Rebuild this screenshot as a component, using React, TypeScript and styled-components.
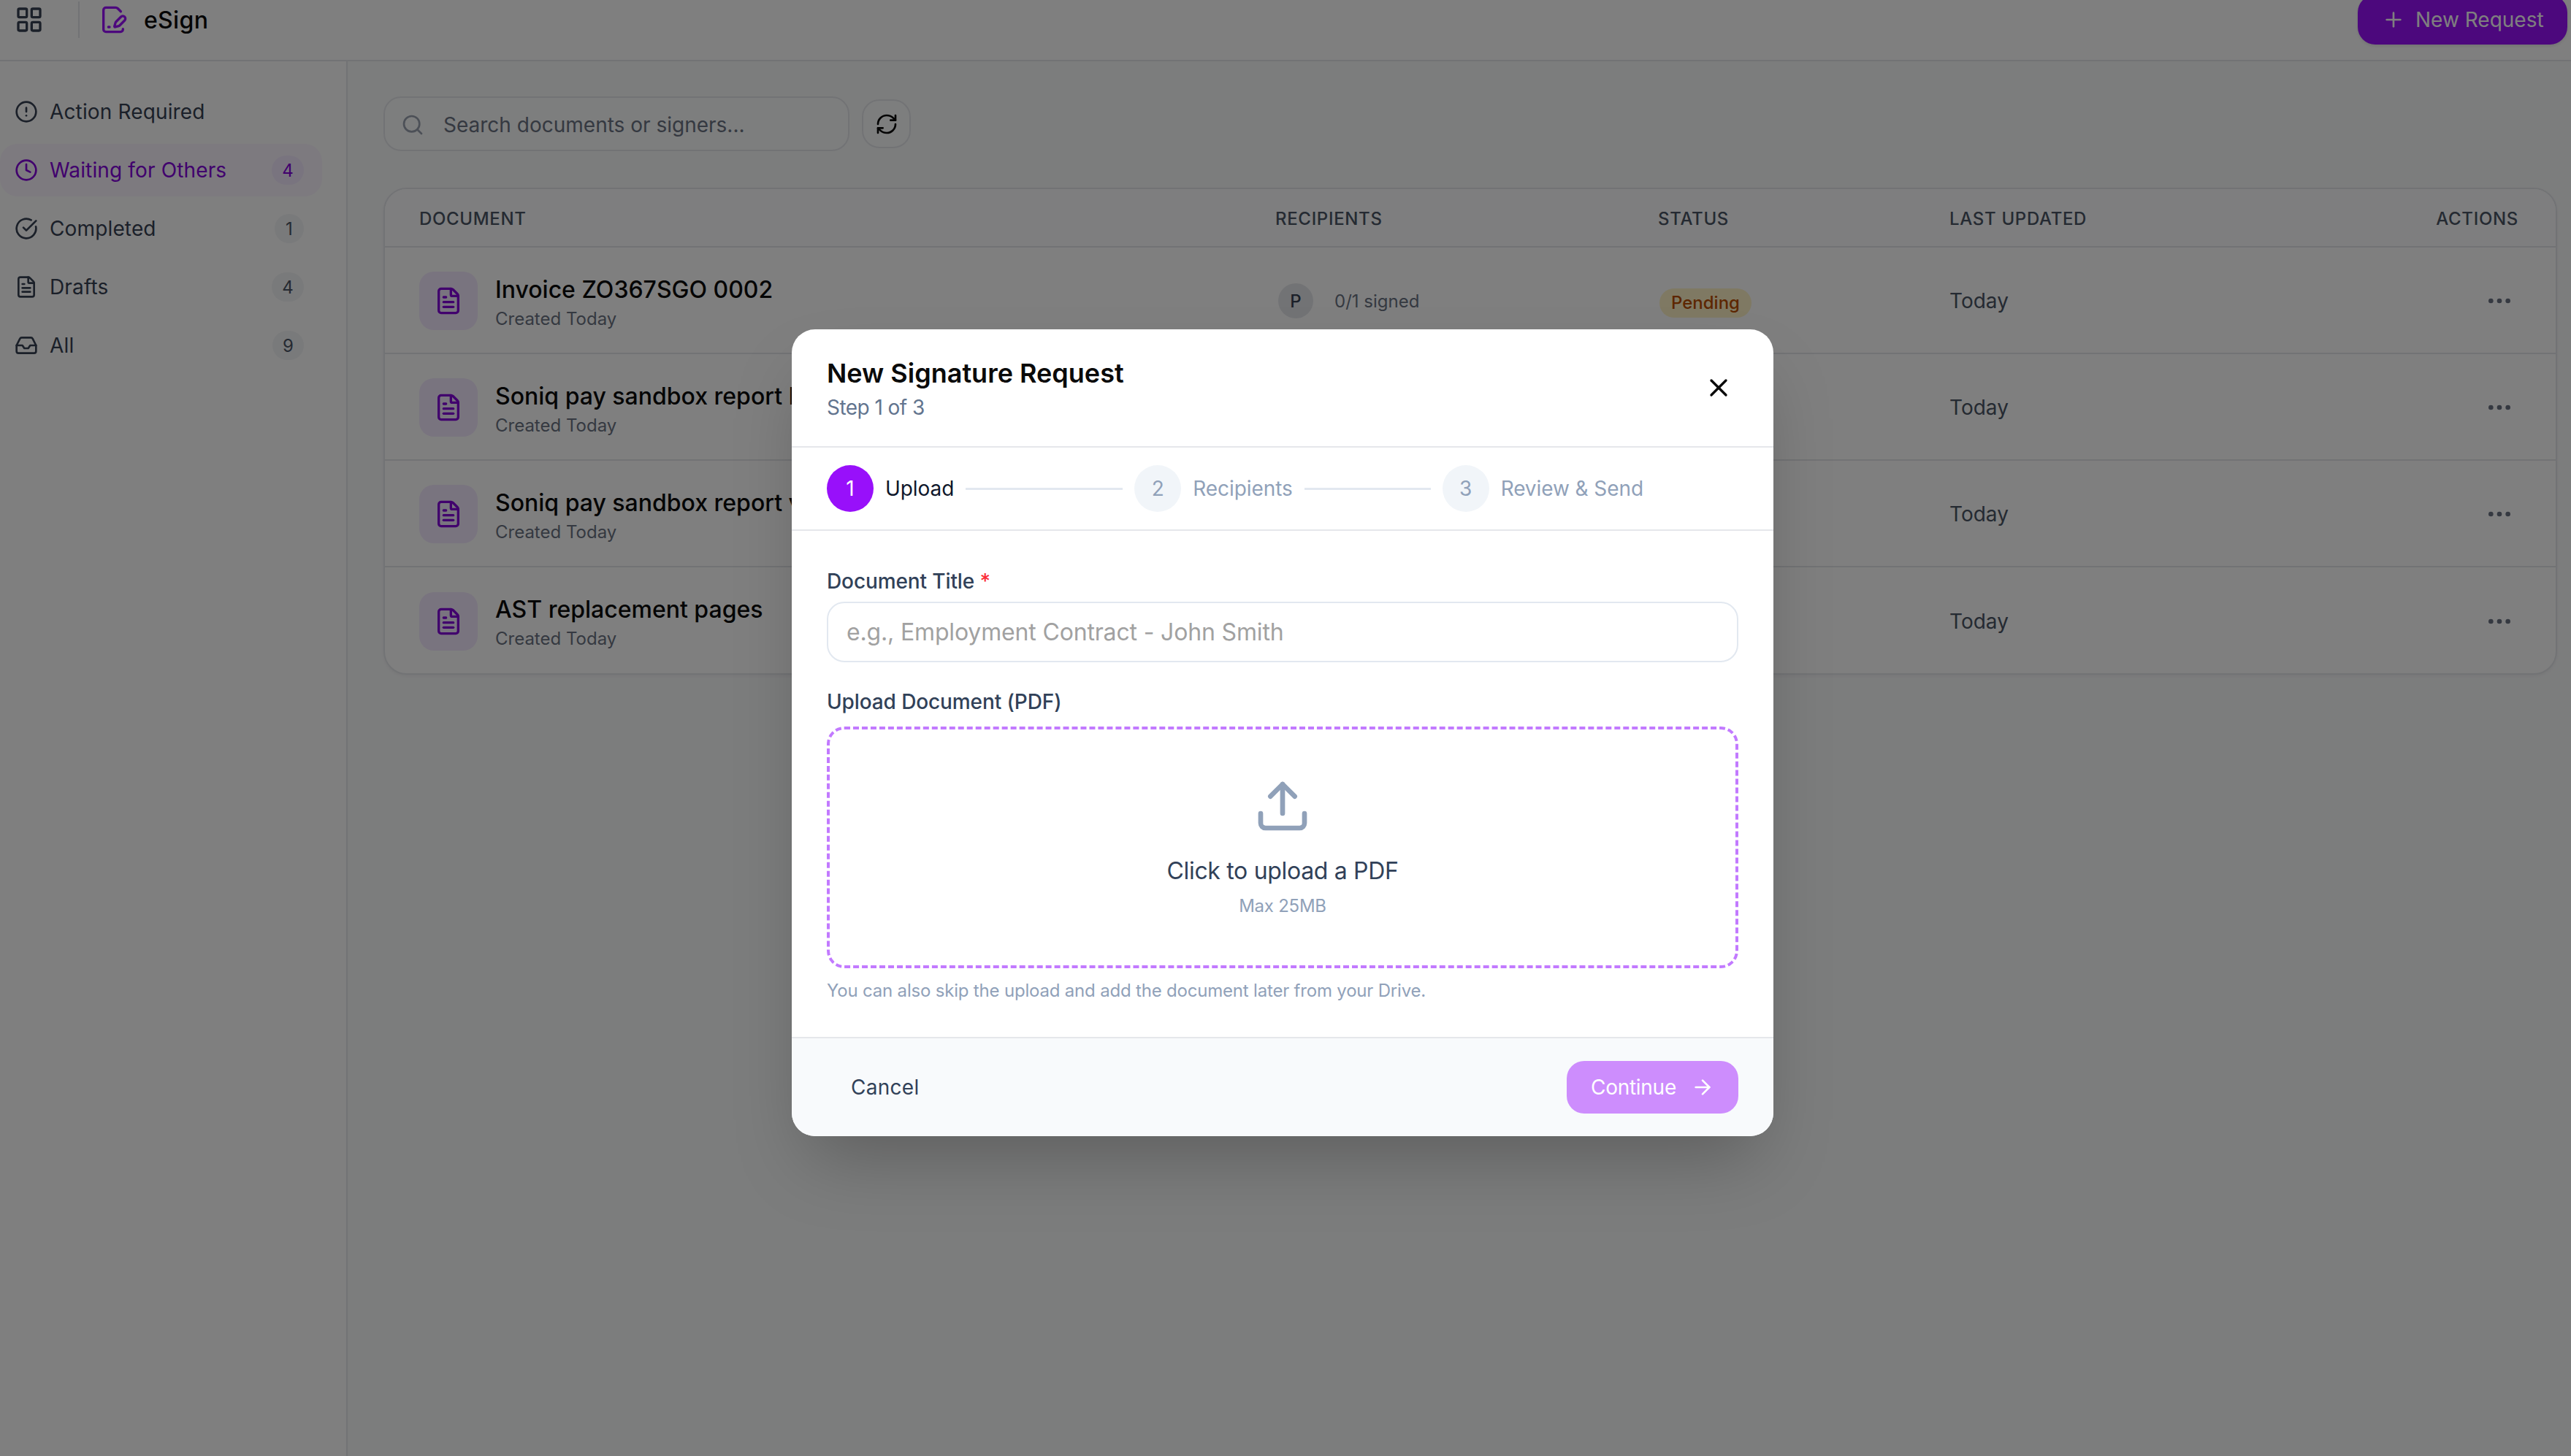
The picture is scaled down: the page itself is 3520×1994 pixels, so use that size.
import React from "react";
import styled, { createGlobalStyle } from "styled-components";
import {
  AlertCircle, ArrowRight, CircleCheckBig, Clock, FilePenLine, FileText, Inbox, LayoutGrid,
  MoreHorizontal, Plus, RefreshCw, Search, Upload, X,
} from "lucide-react";

const Global = createGlobalStyle`
  html, body { margin: 0; padding: 0; height: 100%; overflow: hidden; background: #f9fafb; }
  * { box-sizing: border-box; }
  body { font-family: "Inter", "Liberation Sans", sans-serif; letter-spacing: 0; color: #0a0a0a; }
`;

const Page = styled.div`
  width: 3520px;
  height: 1994px;
  display: flex;
  flex-direction: column;
  position: relative;
  overflow: hidden;
`;

const Header = styled.header`
  flex: none;
  height: 84px;
  padding: 0 5px 28px 20px;
  display: flex;
  align-items: center;
  background: #fff;
  border-bottom: 2px solid #e5e7eb;
`;
const GridIcon = styled(LayoutGrid)`
  color: #364153;
`;
const HeaderDivider = styled.div`
  width: 2px;
  height: 50px;
  background: #e5e7eb;
  margin: 0 26px 0 47px;
`;
const LogoIcon = styled(FilePenLine)`
  color: #9810fa;
`;
const Brand = styled.span`
  font-size: 32px;
  font-weight: 450;
  margin-left: 22px;
  letter-spacing: 0.01em;
`;
const NewRequest = styled.button`
  margin-left: auto;
  height: 68px;
  width: 287px;
  flex: none;
  display: flex;
  align-items: center;
  gap: 14px;
  padding: 0 0 0 33px;
  border: 0;
  border-radius: 24px;
  background: #9810fa;
  color: #fff;
  font: inherit;
  font-size: 28px;
  letter-spacing: 0;
  box-shadow: 0 2px 4px rgba(0, 0, 0, 0.1);
`;

const Body = styled.div`
  flex: 1;
  display: flex;
  min-height: 0;
`;
const Sidebar = styled.nav`
  width: 476px;
  flex: none;
  padding: 33px 33px 0 0;
  display: flex;
  flex-direction: column;
  gap: 8px;
  background: #fff;
  border-right: 2px solid #e5e7eb;
`;
const NavItem = styled.div<{ $active?: boolean }>`
  height: 72px;
  display: flex;
  align-items: center;
  gap: 16px;
  padding: 0 25px 0 20px;
  border-radius: 24px;
  font-size: 28px;
  letter-spacing: 0.005em;
  background: ${(p) => (p.$active ? "#faf5ff" : "transparent")};
  color: ${(p) => (p.$active ? "#8200db" : "#364153")};
`;
const NavLabel = styled.span`
  flex: 1;
`;
const Count = styled.span<{ $active?: boolean }>`
  height: 40px;
  min-width: 40px;
  padding: 0 14px;
  display: flex;
  align-items: center;
  justify-content: center;
  border-radius: 20px;
  font-size: 24px;
  background: ${(p) => (p.$active ? "#f3e8ff" : "#f3f4f6")};
  color: ${(p) => (p.$active ? "#8200db" : "#4a5565")};
`;

const Main = styled.main`
  flex: 1;
  min-width: 0;
  padding: 48px 19px 0 49px;
  background: #f9fafb;
`;
const Toolbar = styled.div`
  display: flex;
  align-items: center;
  gap: 17px;
  margin-bottom: 50px;
`;
const SearchBox = styled.div`
  width: 638px;
  height: 75px;
  display: flex;
  align-items: center;
  gap: 26px;
  padding: 2px 22px 0;
  border: 2px solid #e5e7eb;
  border-radius: 24px;
  background: #fbfcfd;
  font-size: 28px;
  color: #6a7282;
`;
const SearchGlyph = styled(Search)`
  color: #99a1af;
`;
const IconButton = styled.button`
  width: 67px;
  height: 67px;
  display: flex;
  align-items: center;
  justify-content: center;
  padding: 0;
  border: 2px solid #e5e7eb;
  border-radius: 24px;
  background: #fbfcfd;
  color: #0a0a0a;
`;

const Card = styled.section`
  border: 2px solid #e5e7eb;
  border-radius: 32px;
  background: #fff;
  overflow: hidden;
  box-shadow: 0 2px 4px rgba(0, 0, 0, 0.05);
`;
const columns = "1172px 524px 399px 1fr auto";
const HeadRow = styled.div`
  height: 80px;
  display: grid;
  grid-template-columns: ${columns};
  align-items: center;
  padding: 2px 51px 0 47px;
  border-bottom: 2px solid #e5e7eb;
  background: #fcfdfe;
  font-size: 24px;
  font-weight: 450;
  letter-spacing: 0.028em;
  color: #4a5565;
  text-transform: uppercase;
`;
const DocRow = styled.div`
  height: 146px;
  display: grid;
  grid-template-columns: ${columns};
  align-items: center;
  padding: 2px 51px 0 47px;
  border-bottom: 2px solid #e5e7eb;
  &:last-child {
    border-bottom: 0;
    height: 145px;
  }
`;
const DocCell = styled.div`
  display: flex;
  align-items: center;
  gap: 24px;
`;
const DocTile = styled.div`
  width: 80px;
  height: 80px;
  flex: none;
  display: flex;
  align-items: center;
  justify-content: center;
  border-radius: 20px;
  background: #f3e8ff;
  color: #8200db;
`;
const DocText = styled.div`
  display: flex;
  flex-direction: column;
  gap: 4px;
  margin-top: 5px;
`;
const DocTitle = styled.div`
  font-size: 32px;
  font-weight: 450;
  line-height: 40px;
  white-space: nowrap;
`;
const DocSub = styled.div`
  font-size: 24px;
  line-height: 32px;
  color: #6a7282;
`;
const Signers = styled.div`
  display: flex;
  align-items: center;
  gap: 29px;
  padding-left: 4px;
  font-size: 24px;
  color: #6a7282;
`;
const Avatar = styled.span`
  width: 48px;
  height: 48px;
  display: flex;
  align-items: center;
  justify-content: center;
  border-radius: 50%;
  background: #e5e7eb;
  color: #364153;
  font-weight: 450;
`;
const Pill = styled.span`
  justify-self: start;
  margin: 5px 0 0 2px;
  padding: 0 16px;
  height: 40px;
  display: flex;
  align-items: center;
  border-radius: 20px;
  background: #fef3c6;
  color: #bb4d00;
  font-size: 24px;
  font-weight: 450;
`;
const Updated = styled.div`
  font-size: 28px;
  color: #4a5565;
`;
const RowAction = styled.div`
  color: #6a7282;
  display: flex;
  justify-content: flex-end;
  padding-right: 6px;
`;

const Overlay = styled.div`
  position: absolute;
  inset: 0;
  padding: 451px 8px 0 0;
  display: flex;
  justify-content: center;
  align-items: flex-start;
  background: rgba(0, 0, 0, 0.5);
`;
const Modal = styled.div`
  width: 1344px;
  height: 1105px;
  display: flex;
  flex-direction: column;
  border-radius: 32px;
  background: #fff;
  overflow: hidden;
  box-shadow: 0 50px 100px -24px rgba(0, 0, 0, 0.25);
`;
const ModalHead = styled.div`
  height: 162px;
  flex: none;
  display: flex;
  justify-content: space-between;
  align-items: center;
  padding: 0 55px 0 48px;
  border-bottom: 2px solid #e5e7eb;
`;
const HeadText = styled.div`
  padding-top: 3px;
`;
const ModalTitle = styled.h2`
  margin: 0;
  font-size: 36px;
  line-height: 48px;
  font-weight: 600;
  letter-spacing: 0;
  color: #0a0a0a;
`;
const ModalSub = styled.p`
  margin: 3px 0 0;
  font-size: 28px;
  line-height: 40px;
  letter-spacing: -0.02em;
  color: #62748e;
`;
const Close = styled.button`
  padding: 0;
  border: 0;
  background: none;
  display: flex;
  color: #0a0a0a;
`;
const Stepper = styled.div`
  height: 114px;
  flex: none;
  display: flex;
  align-items: center;
  gap: 16px;
  padding: 0 48px;
  border-bottom: 2px solid #e5e7eb;
`;
const Step = styled.div`
  flex: 1;
  min-width: 0;
  display: flex;
  align-items: center;
  gap: 16px;
`;
const StepDot = styled.span<{ $on?: boolean }>`
  width: 64px;
  height: 64px;
  flex: none;
  display: flex;
  align-items: center;
  justify-content: center;
  border-radius: 50%;
  font-size: 28px;
  background: ${(p) => (p.$on ? "#9810fa" : "#f1f5f9")};
  color: ${(p) => (p.$on ? "#fff" : "#90a1b9")};
`;
const StepLabel = styled.span<{ $on?: boolean }>`
  font-size: 28px;
  white-space: nowrap;
  letter-spacing: -0.003em;
  color: ${(p) => (p.$on ? "#0f172b" : "#90a1b9")};
`;
const StepLine = styled.span`
  flex: 1;
  height: 3px;
  background: #e2e8f0;
`;
const Form = styled.div`
  flex: 1;
  display: flex;
  flex-direction: column;
  padding: 51px 48px 0;
`;
const Label = styled.label`
  display: block;
  font-size: 28px;
  line-height: 36px;
  font-weight: 450;
  letter-spacing: -0.004em;
  color: #314158;
  margin-bottom: 10px;
`;
const Required = styled.span`
  color: #fb2c36;
`;
const TextInput = styled.div`
  height: 83px;
  display: flex;
  align-items: center;
  padding: 0 25px;
  border: 2px solid #e2e8f0;
  border-radius: 24px;
  font-size: 32px;
  letter-spacing: -0.005em;
  color: #a1a1a1;
  margin-bottom: 36px;
`;
const Drop = styled.div`
  height: 331px;
  display: flex;
  flex-direction: column;
  align-items: center;
  padding-top: 65px;
  border: 4px dashed #c27aff;
  border-radius: 24px;
  margin-top: 6px;
`;
const DropIcon = styled(Upload)`
  color: #90a1b9;
`;
const DropTitle = styled.div`
  margin-top: 27px;
  font-size: 32px;
  line-height: 44px;
  letter-spacing: -0.01em;
  color: #314158;
`;
const DropHint = styled.div`
  margin-top: 10px;
  font-size: 24px;
  line-height: 32px;
  letter-spacing: -0.01em;
  color: #90a1b9;
`;
const Help = styled.p`
  margin: 15px 0 0;
  font-size: 24px;
  line-height: 32px;
  letter-spacing: -0.008em;
  color: #90a1b9;
`;
const Footer = styled.div`
  height: 136px;
  flex: none;
  display: flex;
  align-items: center;
  justify-content: space-between;
  padding: 0 48px 0 81px;
  border-top: 2px solid #e5e7eb;
  background: #f8fafc;
`;
const Cancel = styled.button`
  padding: 0;
  border: 0;
  background: none;
  font: inherit;
  font-size: 28px;
  letter-spacing: 0.01em;
  color: #314158;
`;
const Continue = styled.button`
  width: 235px;
  height: 72px;
  display: flex;
  align-items: center;
  justify-content: center;
  gap: 20px;
  padding: 0;
  border: 0;
  border-radius: 24px;
  background: #cd8dfd;
  color: #fff;
  font: inherit;
  font-size: 28px;
  letter-spacing: -0.01em;
`;

const nav = [
  { label: "Action Required", Icon: AlertCircle },
  { label: "Waiting for Others", Icon: Clock, count: 4, active: true },
  { label: "Completed", Icon: CircleCheckBig, count: 1 },
  { label: "Drafts", Icon: FileText, count: 4 },
  { label: "All", Icon: Inbox, count: 9 },
];
const docs = [
  "Invoice ZO367SGO 0002",
  "Soniq pay sandbox report Final",
  "Soniq pay sandbox report v2",
  "AST replacement pages",
];
const steps = ["Upload", "Recipients", "Review & Send"];

export default function App() {
  return (
    <Page>
      <Global />
      <Header>
        <GridIcon size={40} />
        <HeaderDivider />
        <LogoIcon size={40} />
        <Brand>eSign</Brand>
        <NewRequest>
          <Plus size={32} />
          New Request
        </NewRequest>
      </Header>
      <Body>
        <Sidebar>
          {nav.map(({ label, Icon, count, active }) => (
            <NavItem key={label} $active={active}>
              <Icon size={32} />
              <NavLabel>{label}</NavLabel>
              {count !== undefined && <Count $active={active}>{count}</Count>}
            </NavItem>
          ))}
        </Sidebar>
        <Main>
          <Toolbar>
            <SearchBox>
              <SearchGlyph size={32} />
              Search documents or signers...
            </SearchBox>
            <IconButton>
              <RefreshCw size={32} />
            </IconButton>
          </Toolbar>
          <Card>
            <HeadRow>
              <span>Document</span>
              <span>Recipients</span>
              <span>Status</span>
              <span>Last Updated</span>
              <span>Actions</span>
            </HeadRow>
            {docs.map((title) => (
              <DocRow key={title}>
                <DocCell>
                  <DocTile>
                    <FileText size={40} />
                  </DocTile>
                  <DocText>
                    <DocTitle>{title}</DocTitle>
                    <DocSub>Created Today</DocSub>
                  </DocText>
                </DocCell>
                <Signers>
                  <Avatar>P</Avatar>
                  0/1 signed
                </Signers>
                <Pill>Pending</Pill>
                <Updated>Today</Updated>
                <RowAction>
                  <MoreHorizontal size={40} />
                </RowAction>
              </DocRow>
            ))}
          </Card>
        </Main>
      </Body>
      <Overlay>
        <Modal>
          <ModalHead>
            <HeadText>
              <ModalTitle>New Signature Request</ModalTitle>
              <ModalSub>Step 1 of 3</ModalSub>
            </HeadText>
            <Close>
              <X size={40} />
            </Close>
          </ModalHead>
          <Stepper>
            {steps.map((s, i) => (
              <Step key={s}>
                <StepDot $on={i === 0}>{i + 1}</StepDot>
                <StepLabel $on={i === 0}>{s}</StepLabel>
                {i < 2 && <StepLine />}
              </Step>
            ))}
          </Stepper>
          <Form>
            <Label>
              Document Title <Required>*</Required>
            </Label>
            <TextInput>e.g., Employment Contract - John Smith</TextInput>
            <Label>Upload Document (PDF)</Label>
            <Drop>
              <DropIcon size={80} />
              <DropTitle>Click to upload a PDF</DropTitle>
              <DropHint>Max 25MB</DropHint>
            </Drop>
            <Help>You can also skip the upload and add the document later from your Drive.</Help>
          </Form>
          <Footer>
            <Cancel>Cancel</Cancel>
            <Continue>
              Continue
              <ArrowRight size={32} />
            </Continue>
          </Footer>
        </Modal>
      </Overlay>
    </Page>
  );
}
